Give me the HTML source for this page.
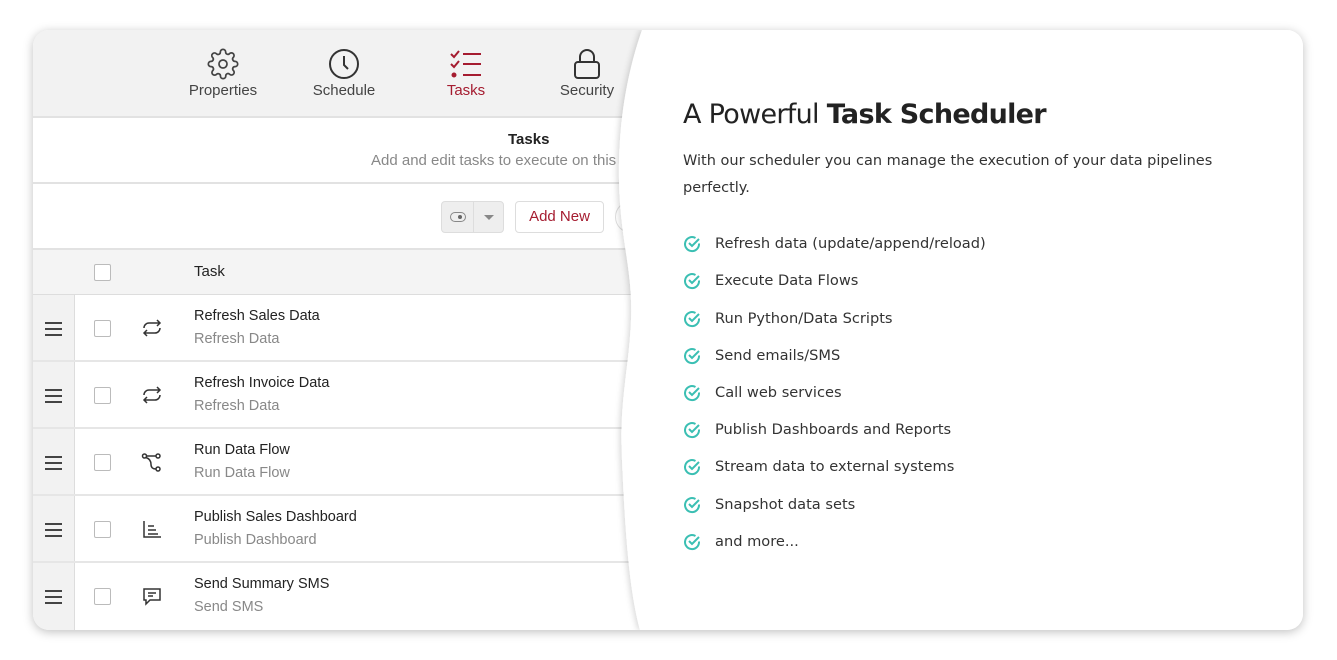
<!DOCTYPE html>
<html><head><meta charset="utf-8"><style>
*{margin:0;padding:0;box-sizing:border-box}
body{width:1337px;height:660px;background:#fff;font-family:"Liberation Sans",sans-serif;position:relative;overflow:hidden}
.card{position:absolute;left:33px;top:30px;width:1270px;height:600px;border-radius:16px;overflow:hidden;background:#fff;box-shadow:0 2px 10px rgba(0,0,0,.25)}
.a{position:absolute}
.nav{left:0;top:0;width:640px;height:88px;background:#f2f2f2;border-bottom:2px solid #e2e2e2}
.navi{position:absolute;top:18px;width:100px;text-align:center;font-size:15px;color:#444}
.navi svg{display:block;margin:0 auto 2px}
.hdr{left:0;top:88px;width:640px;height:66px;border-bottom:2px solid #e2e2e2}
.tb{left:0;top:154px;width:640px;height:66px;border-bottom:2px solid #e2e2e2}
.th{left:0;top:220px;width:640px;height:45px;background:#f4f4f4;border-bottom:1px solid #ddd}
.row{position:absolute;left:0;width:640px;height:67px;border-bottom:2px solid #e6e6e6}
.gut{position:absolute;left:0;top:0;width:42px;height:100%;background:#f2f2f2;border-right:1px solid #ddd}
.cb{position:absolute;left:61px;width:17px;height:17px;border:1.5px solid #bbb;border-radius:2px;background:#fff}
.t1{position:absolute;left:161px;top:13px;font-size:14.5px;color:#222}
.t2{position:absolute;left:161px;top:36px;font-size:14.5px;color:#888}
.ham{position:absolute;left:12px;top:27px;width:17px}
.ham i{display:block;height:2px;background:#444;margin-bottom:4px}
.ic{position:absolute;left:108px;top:22px}
.li{position:absolute;left:650px;color:#333;font-family:"DejaVu Sans","Liberation Sans",sans-serif;font-size:14.6px}
.li svg{position:absolute;left:0;top:0}
.li span{position:absolute;left:32px;top:0;white-space:nowrap}
</style></head><body>
<div class="card">
 <div class="a nav">
  <div class="navi" style="left:140px"><svg width="32" height="32" viewBox="0 0 24 24" fill="none" stroke="#444" stroke-width="1.3"><circle cx="12" cy="12" r="3"/><path d="M19.4 15a1.65 1.65 0 0 0 .33 1.82l.06.06a2 2 0 1 1-2.83 2.83l-.06-.06a1.65 1.65 0 0 0-1.820-.33 1.65 1.65 0 0 0-1 1.51V21a2 2 0 1 1-4 0v-.09A1.65 1.65 0 0 0 9 19.4a1.65 1.65 0 0 0-1.82.33l-.06.06a2 2 0 1 1-2.830-2.83l.06-.06A1.65 1.65 0 0 0 4.68 15a1.65 1.65 0 0 0-1.51-1H3a2 2 0 1 1 0-4h.09A1.65 1.65 0 0 0 4.6 9a1.65 1.65 0 0 0-.33-1.82l-.06-.06a2 2 0 1 1 2.83-2.83l.06.06A1.65 1.65 0 0 0 9 4.68 1.65 1.65 0 0 0 10 3.170V3a2 2 0 1 1 4 0v.09a1.65 1.65 0 0 0 1 1.51 1.65 1.65 0 0 0 1.82-.33l.06-.06a2 2 0 1 1 2.830 2.83l-.06.06A1.65 1.65 0 0 0 19.4 9 1.65 1.65 0 0 0 20.91 10H21a2 2 0 1 1 0 4h-.09a1.65 1.65 0 0 0-1.51 1z"/></svg>Properties</div>
  <div class="navi" style="left:261px"><svg width="32" height="32" viewBox="0 0 32 32" fill="none" stroke="#333" stroke-width="2"><circle cx="16" cy="16" r="14"/><path d="M16 8v9l4 4"/></svg>Schedule</div>
  <div class="navi" style="left:383px;color:#a51c30"><svg width="34" height="32" viewBox="0 0 34 32" fill="none" stroke="#a51c30" stroke-width="2"><path d="M2 6l3 3 5-6M2 16l3 3 5-6M14 6h18M14 16h18M14 27h18"/><circle cx="5" cy="27" r="1.5" fill="#a51c30"/></svg>Tasks</div>
  <div class="navi" style="left:504px"><svg width="32" height="32" viewBox="0 0 32 32" fill="none" stroke="#333" stroke-width="2"><rect x="4" y="14" width="24" height="16" rx="3"/><path d="M9 14V9a7 7 0 0 1 14 0v5"/></svg>Security</div>
 </div>
 <div class="a hdr"><div class="a" style="left:475px;top:13px;font-size:15px;font-weight:bold;color:#222">Tasks</div><div class="a" style="left:338px;top:34px;font-size:15px;color:#888;white-space:nowrap">Add and edit tasks to execute on this schedule</div></div>
 <div class="a tb">
  <div class="a" style="left:408px;top:17px;width:63px;height:32px;background:#eee;border:1px solid #ddd;border-radius:4px"><div class="a" style="left:31px;top:0;width:1px;height:30px;background:#ddd"></div><div class="a" style="left:8px;top:10px;width:16px;height:10px;border:1.5px solid #888;border-radius:5px"><div class="a" style="left:7px;top:2px;width:4px;height:4px;background:#666;border-radius:50%"></div></div><div class="a" style="left:42px;top:13px;border:5px solid transparent;border-top:5px solid #888"></div></div>
  <div class="a" style="left:482px;top:17px;width:89px;height:32px;border:1px solid #ddd;border-radius:4px;color:#a51c30;font-size:15px;text-align:center;line-height:30px">Add New</div>
  <div class="a" style="left:582px;top:17px;width:32px;height:32px;border:1px solid #ddd;border-radius:50%"></div>
 </div>
 <div class="a th"><div class="cb" style="top:14px"></div><div class="a" style="left:161px;top:13px;font-size:15px;color:#222">Task</div></div>
 <div class="row" style="top:265px"><div class="gut"></div><div class="ham"><i></i><i></i><i></i></div><div class="cb" style="top:25px"></div><svg class="ic" width="22" height="22" viewBox="0 0 22 22" fill="none" stroke="#333" stroke-width="1.5"><path d="M3 11a5 5 0 0 1 5-5h11M16 3l3 3-3 3M19 11a5 5 0 0 1-5 5H3M6 13l-3 3 3 3"/></svg><div class="t1">Refresh Sales Data</div><div class="t2">Refresh Data</div></div>
 <div class="row" style="top:332px"><div class="gut"></div><div class="ham"><i></i><i></i><i></i></div><div class="cb" style="top:25px"></div><svg class="ic" width="22" height="22" viewBox="0 0 22 22" fill="none" stroke="#333" stroke-width="1.5"><path d="M3 11a5 5 0 0 1 5-5h11M16 3l3 3-3 3M19 11a5 5 0 0 1-5 5H3M6 13l-3 3 3 3"/></svg><div class="t1">Refresh Invoice Data</div><div class="t2">Refresh Data</div></div>
 <div class="row" style="top:399px"><div class="gut"></div><div class="ham"><i></i><i></i><i></i></div><div class="cb" style="top:25px"></div><svg class="ic" width="22" height="22" viewBox="0 0 22 22" fill="none" stroke="#333" stroke-width="1.5"><circle cx="3.5" cy="5" r="2"/><circle cx="17" cy="5" r="2"/><circle cx="17" cy="18" r="2"/><path d="M5.5 5h9.5M5 6.5c3 1 5 3 5 7 0 3 2 4.5 5 4.5"/></svg><div class="t1">Run Data Flow</div><div class="t2">Run Data Flow</div></div>
 <div class="row" style="top:466px"><div class="gut"></div><div class="ham"><i></i><i></i><i></i></div><div class="cb" style="top:25px"></div><svg class="ic" width="22" height="22" viewBox="0 0 22 22" fill="none" stroke="#333" stroke-width="1.5"><path d="M3 3v16h17M7 8h6M7 12h8M7 16h10"/></svg><div class="t1">Publish Sales Dashboard</div><div class="t2">Publish Dashboard</div></div>
 <div class="row" style="top:533px;border:none"><div class="gut"></div><div class="ham"><i></i><i></i><i></i></div><div class="cb" style="top:25px"></div><svg class="ic" width="22" height="22" viewBox="0 0 22 22" fill="none" stroke="#333" stroke-width="1.5"><path d="M3 4h16v11H9l-4 4v-4H3zM7 8h8M7 11h5"/></svg><div class="t1">Send Summary SMS</div><div class="t2">Send SMS</div></div>
 <svg class="a" style="left:0;top:0" width="1270" height="600"><defs><filter id="s" x="-5%" y="-5%" width="110%" height="110%"><feDropShadow dx="-2" dy="0" stdDeviation="3" flood-opacity=".15"/></filter></defs><path filter="url(#s)" fill="#fff" d="M609 0 C595 40 585 90 586 150 C587 210 600 240 598 290 C596 340 586 370 589 430 C592 500 596 560 607 600 L1270 600 L1270 0Z"/></svg>
 <div class="a" style="left:650px;top:69px;font-size:27px;color:#222;font-family:'DejaVu Sans','Liberation Sans',sans-serif;font-weight:400;letter-spacing:-0.7px;white-space:nowrap">A Powerful <b style="font-weight:700">Task Scheduler</b></div>
 <div class="a" style="left:650px;top:118px;width:560px;font-size:14.5px;line-height:27px;color:#333;font-family:'DejaVu Sans','Liberation Sans',sans-serif">With our scheduler you can manage the execution of your data pipelines perfectly.</div>
 <div class="li" style="top:205px"><svg width="18" height="18" viewBox="0 0 18 18" fill="none" stroke="#3bbfb3" stroke-width="2"><path d="M16 8.5A7 7 0 1 1 12.5 3M6 8l3 3 7-7"/></svg><span>Refresh data (update/append/reload)</span></div>
 <div class="li" style="top:242px"><svg width="18" height="18" viewBox="0 0 18 18" fill="none" stroke="#3bbfb3" stroke-width="2"><path d="M16 8.5A7 7 0 1 1 12.5 3M6 8l3 3 7-7"/></svg><span>Execute Data Flows</span></div>
 <div class="li" style="top:280px"><svg width="18" height="18" viewBox="0 0 18 18" fill="none" stroke="#3bbfb3" stroke-width="2"><path d="M16 8.5A7 7 0 1 1 12.5 3M6 8l3 3 7-7"/></svg><span>Run Python/Data Scripts</span></div>
 <div class="li" style="top:317px"><svg width="18" height="18" viewBox="0 0 18 18" fill="none" stroke="#3bbfb3" stroke-width="2"><path d="M16 8.5A7 7 0 1 1 12.5 3M6 8l3 3 7-7"/></svg><span>Send emails/SMS</span></div>
 <div class="li" style="top:354px"><svg width="18" height="18" viewBox="0 0 18 18" fill="none" stroke="#3bbfb3" stroke-width="2"><path d="M16 8.5A7 7 0 1 1 12.5 3M6 8l3 3 7-7"/></svg><span>Call web services</span></div>
 <div class="li" style="top:391px"><svg width="18" height="18" viewBox="0 0 18 18" fill="none" stroke="#3bbfb3" stroke-width="2"><path d="M16 8.5A7 7 0 1 1 12.5 3M6 8l3 3 7-7"/></svg><span>Publish Dashboards and Reports</span></div>
 <div class="li" style="top:428px"><svg width="18" height="18" viewBox="0 0 18 18" fill="none" stroke="#3bbfb3" stroke-width="2"><path d="M16 8.5A7 7 0 1 1 12.5 3M6 8l3 3 7-7"/></svg><span>Stream data to external systems</span></div>
 <div class="li" style="top:466px"><svg width="18" height="18" viewBox="0 0 18 18" fill="none" stroke="#3bbfb3" stroke-width="2"><path d="M16 8.5A7 7 0 1 1 12.5 3M6 8l3 3 7-7"/></svg><span>Snapshot data sets</span></div>
 <div class="li" style="top:503px"><svg width="18" height="18" viewBox="0 0 18 18" fill="none" stroke="#3bbfb3" stroke-width="2"><path d="M16 8.5A7 7 0 1 1 12.5 3M6 8l3 3 7-7"/></svg><span>and more...</span></div>
</div>
</body></html>
